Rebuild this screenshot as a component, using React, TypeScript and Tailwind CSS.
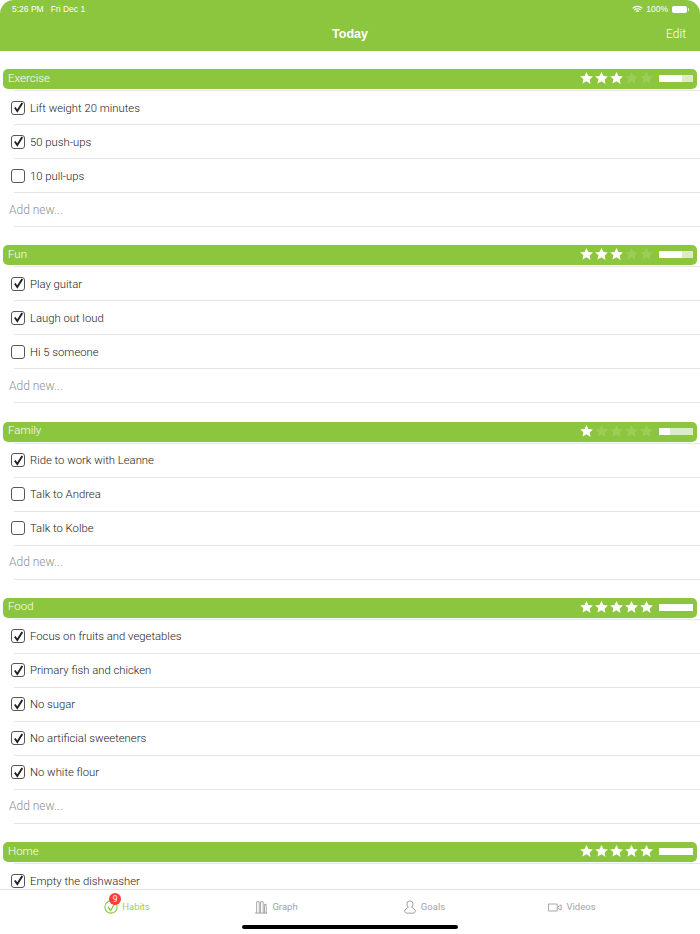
import { ReactNode } from "react";

const sections = [
  { name: "Exercise", stars: 3, progress: 67, items: [["Lift weight 20 minutes", true], ["50 push-ups", true], ["10 pull-ups", false]], add: true },
  { name: "Fun", stars: 3, progress: 67, items: [["Play guitar", true], ["Laugh out loud", true], ["Hi 5 someone", false]], add: true },
  { name: "Family", stars: 1, progress: 33, items: [["Ride to work with Leanne", true], ["Talk to Andrea", false], ["Talk to Kolbe", false]], add: true },
  { name: "Food", stars: 5, progress: 100, items: [["Focus on fruits and vegetables", true], ["Primary fish and chicken", true], ["No sugar", true], ["No artificial sweeteners", true], ["No white flour", true]], add: true },
  { name: "Home", stars: 5, progress: 100, items: [["Empty the dishwasher", true]], add: false },
] as { name: string; stars: number; progress: number; items: [string, boolean][]; add: boolean }[];

function Star({ on }: { on: boolean }) {
  return (
    <svg viewBox="0 0 24 24" className={on ? "w-[15px] h-[14px] fill-white" : "w-[15px] h-[14px] fill-[#9bcd57]"}>
      <path d="M12 1.500l3.300 7 7.700 1-5.600 5.200 1.500 7.600L12 17.600l-6.900 3.700 1.500-7.600L1 9.500l7.700-1z" />
    </svg>
  );
}

function SectionHeader({ name, stars, progress }: { name: string; stars: number; progress: number }) {
  return (
    <div className="mx-[3px] h-[20px] rounded-[5px] bg-[#8cc63f] flex items-center pl-[5px] pr-[4px] text-white">
      <span className="text-[11.5px] leading-[18px] mb-[3px] font-light flex-1">{name}</span>
      <div className="flex items-center mb-[2px]">
        {[1, 2, 3, 4, 5].map((n) => (
          <Star key={n} on={n <= stars} />
        ))}
      </div>
      <div className="ml-[5px] mb-[1px] w-[34px] h-[7px] bg-[#dcedc5]">
        <div className="h-full bg-white" style={{ width: `${progress}%` }} />
      </div>
    </div>
  );
}

function Row({ label, checked }: { label: string; checked: boolean }) {
  return (
    <div className="h-[34px] ml-[14px] border-b border-[#e6e6e6] flex items-center">
      <div className="w-[14px] h-[14px] ml-[-3px] mr-[5px] border-[1.5px] border-[#55555a] rounded-[3px] shrink-0 flex items-center justify-center">
        {checked && (
          <svg viewBox="0 0 11 11" className="w-[11px] h-[11px] fill-none stroke-[#222]" strokeWidth="1.900">
            <path d="M1.800 5.500L4.300 9L9.300 1" />
          </svg>
        )}
      </div>
      <span className="text-[11.3px] leading-[16px] mt-[2px] text-[#222] font-light">{label}</span>
    </div>
  );
}

function Tab({ label, active, children }: { label: string; active?: boolean; children: ReactNode }) {
  return (
    <div className="flex items-center justify-center gap-[4px] w-[148px]">
      {children}
      <span className={active ? "text-[9.5px] text-[#9ccf5a] mr-[2px]" : "text-[9.5px] text-[#a3a3a3]"}>{label}</span>
    </div>
  );
}

export default function App() {
  return (
    <div className="relative w-[700px] h-[934px] overflow-hidden flex flex-col bg-white font-['Roboto',sans-serif]">
      <header className="h-[51px] shrink-0 bg-[#8cc63f] text-white rounded-t-[14px] relative flex items-center justify-center">
        <div className="absolute top-[3px] left-[12px] text-[8.5px] flex gap-[7px] font-['Liberation_Sans',sans-serif]">
          <span>5:26 PM</span>
          <span>Fri Dec 1</span>
        </div>
        <div className="absolute top-[3px] right-[11px] flex items-center gap-[3px] text-[8.5px] font-['Liberation_Sans',sans-serif]">
          <svg viewBox="0 0 16 12" className="w-[11px] h-[9px] fill-none stroke-white" strokeWidth="1.8">
            <path d="M1 4.400a10 10 0 0 1 14 0M3.400 6.800a6.600 6.600 0 0 1 9.200 0M5.800 9a3.200 3.200 0 0 1 4.400 0" />
          </svg>
          <span>100%</span>
          <div className="ml-[1px] w-[15px] h-[7px] rounded-[2px] bg-white" />
          <div className="ml-[-2px] w-[1px] h-[3px] bg-[#dcedc5]" />
        </div>
        <span className="mt-[17px] text-[12.5px] font-bold font-['Liberation_Sans',sans-serif]">Today</span>
        <span className="absolute right-[14px] top-[26px] text-[12px] leading-[16px] font-light">Edit</span>
      </header>

      <main className="flex-1 min-h-0 overflow-hidden pt-[18px]">
        {sections.map((s) => (
          <section key={s.name} className="mb-[18.33px]">
            <SectionHeader name={s.name} stars={s.stars} progress={s.progress} />
            <div className="mt-[1px]">
              <div className="ml-[14px] h-[1px] bg-[#e6e6e6]" />
              {s.items.map(([label, checked]) => (
                <Row key={label} label={label} checked={checked} />
              ))}
              {s.add && (
                <div className="h-[34px] ml-[14px] border-b border-[#e6e6e6] flex items-center">
                  <span className="ml-[-5px] text-[12px] font-light text-[#8f8f8f]">Add new...</span>
                </div>
              )}
            </div>
          </section>
        ))}
      </main>

      <nav className="h-[45px] shrink-0 bg-white border-t border-[#e3e3e3] flex items-start justify-center pt-[10px]">
        <Tab label="Habits" active>
          <div className="relative w-[14px] h-[14px]">
            <svg viewBox="0 0 16 16" className="w-[14px] h-[14px] fill-none stroke-[#8cc63f]" strokeWidth="1.2">
              <circle cx="8" cy="8" r="7" />
              <path d="M4.500 8l3 4L13 3" strokeWidth="1.500" />
            </svg>
            <div className="absolute top-[-7px] left-[5px] w-[12px] h-[12px] rounded-full bg-[#fc3d39] text-white text-[8.5px] leading-[12px] text-center">9</div>
          </div>
        </Tab>
        <Tab label="Graph">
          <svg viewBox="0 0 16 16" className="w-[14px] h-[14px] fill-none stroke-[#929292]" strokeWidth="0.9">
            <path d="M1 15h14M3 15V2h3v13M7.500 15V2h3v13M12 15V5h2v10" />
          </svg>
        </Tab>
        <Tab label="Goals">
          <svg viewBox="0 0 16 16" className="w-[14px] h-[14px] fill-none stroke-[#929292]" strokeWidth="1">
            <path d="M8 1a3.500 3.500 0 0 0-3.500 3.600c0 1.600.8 3 1.600 3.800C4 9.400 2 10.800 2 12.800c0 1.300 1.300 2.200 2.600 2.200h7c1.200 0 2.400-.9 2.400-2.200 0-2-2-3.400-4.100-4.400.8-.8 1.600-2.200 1.600-3.800A3.500 3.500 0 0 0 8 1z" />
          </svg>
        </Tab>
        <Tab label="Videos">
          <svg viewBox="0 0 16 10" className="w-[14px] h-[9px] fill-none stroke-[#929292]" strokeWidth="0.9">
            <path d="M.5 1h10v8H.5zM11 4.500L15 2v6l-4-2.500z" />
          </svg>
        </Tab>
      </nav>

      <div className="absolute bottom-[5px] left-[242px] w-[216px] h-[4px] rounded-full bg-black" />
    </div>
  );
}
